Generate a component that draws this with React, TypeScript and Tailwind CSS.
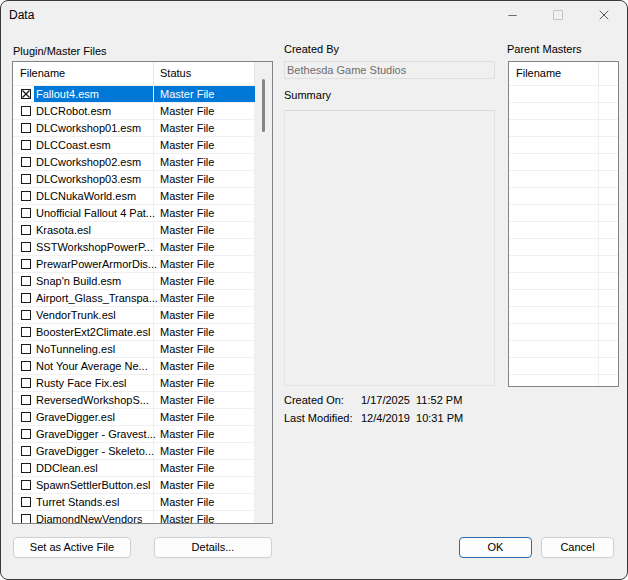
import { Minus, X } from "lucide-react";

const files = [
  "Fallout4.esm",
  "DLCRobot.esm",
  "DLCworkshop01.esm",
  "DLCCoast.esm",
  "DLCworkshop02.esm",
  "DLCworkshop03.esm",
  "DLCNukaWorld.esm",
  "Unofficial Fallout 4 Pat...",
  "Krasota.esl",
  "SSTWorkshopPowerP...",
  "PrewarPowerArmorDis...",
  "Snap'n Build.esm",
  "Airport_Glass_Transpa...",
  "VendorTrunk.esl",
  "BoosterExt2Climate.esl",
  "NoTunneling.esl",
  "Not Your Average Ne...",
  "Rusty Face Fix.esl",
  "ReversedWorkshopS...",
  "GraveDigger.esl",
  "GraveDigger - Gravest...",
  "GraveDigger - Skeleto...",
  "DDClean.esl",
  "SpawnSettlerButton.esl",
  "Turret Stands.esl",
  "DiamondNewVendors",
];

const CheckBox = ({ checked }: { checked?: boolean }) => (
  <svg width="10" height="10" viewBox="0 0 10 10" className="shrink-0">
    <rect x="0.5" y="0.5" width="9" height="9" fill="white" stroke="#1a1a1a" />
    {checked && (
      <path d="M1.5 1.5 L8.5 8.5 M8.5 1.5 L1.5 8.5" stroke="#1a1a1a" strokeWidth="1.3" />
    )}
  </svg>
);

const FileRow = ({ name, index }: { name: string; index: number }) => {
  const selected = index === 0;
  return (
    <div className="flex h-[17px] shrink-0">
      <div className="flex w-[141px] items-center border-b border-r border-[#f0f0f0] pl-[8px]">
        <CheckBox checked={selected} />
        <span
          className={
            selected
              ? "ml-[3px] flex h-[16px] flex-1 items-center bg-[#0078d7] pl-[2px] text-white"
              : "ml-[3px] flex h-[16px] flex-1 items-center pl-[2px]"
          }
        >
          <span className="overflow-hidden whitespace-nowrap">{name}</span>
        </span>
      </div>
      <div
        className={
          selected
            ? "flex w-[101px] items-start border-b border-[#f0f0f0]"
            : "flex w-[101px] items-start border-b border-r border-[#f0f0f0]"
        }
      >
        <span
          className={
            selected
              ? "flex h-[16px] w-full items-center bg-[#0078d7] pl-[6px] text-white"
              : "flex h-[16px] w-full items-center pl-[6px]"
          }
        >
          Master File
        </span>
      </div>
    </div>
  );
};

const App = () => {
  return (
    <div className="h-[580px] w-[628px] overflow-hidden rounded-[8px] border border-[#3a3a3a] bg-[#f0f0f0] font-['Liberation_Sans',Arial,sans-serif] text-[11px] text-black">
      {/* title bar */}
      <div className="flex h-[31px] items-center pb-[3px]">
        <span className="pl-[8px] text-[12px]">Data</span>
        <div className="ml-auto flex h-full">
          <div className="flex w-[46px] items-center justify-center">
            <Minus size={13} strokeWidth={1.2} color="#222" />
          </div>
          <div className="flex w-[46px] items-center justify-center">
            <div className="h-[10px] w-[10px] rounded-[1px] border border-[#c4c4c4]" />
          </div>
          <div className="flex w-[46px] items-center justify-center">
            <X size={16} strokeWidth={1.1} color="#222" />
          </div>
        </div>
      </div>

      {/* body */}
      <div className="flex h-[492px] pl-[11px]">
        {/* plugin list */}
        <div className="flex w-[261px] flex-col">
          <div className="mt-[11px] h-[16px] pl-[1px] leading-[16px]">Plugin/Master Files</div>
          <div className="mt-[2px] flex h-[463px] overflow-hidden border border-[#7f838a] bg-white">
            <div className="flex w-[242px] flex-col overflow-hidden">
              <div className="flex h-[24px] shrink-0 border-b border-[#f0f0f0]">
                <div className="flex w-[141px] items-center border-r border-[#e5e5e5] pl-[7px]">
                  Filename
                </div>
                <div className="flex w-[101px] items-center border-r border-[#e5e5e5] pl-[6px]">
                  Status
                </div>
              </div>
              {files.map((f, i) => (
                <FileRow key={f} name={f} index={i} />
              ))}
            </div>
            <div className="w-[17px] bg-[#f0f0f0]">
              <div className="ml-[7px] mt-[17px] h-[53px] w-[3px] rounded-full bg-[#858585]" />
            </div>
          </div>
        </div>

        {/* details */}
        <div className="ml-[11px] flex w-[211px] flex-col">
          <div className="mt-[9px] h-[16px] leading-[16px]">Created By</div>
          <div className="mt-[4px] flex h-[18px] items-center border border-[#dedede] pl-[2px] text-[#6d6d6d]">
            Bethesda Game Studios
          </div>
          <div className="mt-[8px] h-[16px] leading-[16px]">Summary</div>
          <div className="mt-[7px] h-[276px] border border-[#e3e3e3] border-t-[#d9d9d9]" />
          <div className="mt-[5px] flex h-[18px] items-center">
            <span className="w-[77px]">Created On:</span>
            <span className="whitespace-pre">1/17/2025  11:52 PM</span>
          </div>
          <div className="flex h-[18px] items-center">
            <span className="w-[77px]">Last Modified:</span>
            <span className="whitespace-pre">12/4/2019  10:31 PM</span>
          </div>
        </div>

        {/* parent masters */}
        <div className="ml-[13px] flex w-[111px] flex-col">
          <div className="ml-[-1px] mt-[9px] h-[16px] leading-[16px]">Parent Masters</div>
          <div className="mt-[4px] flex h-[326px] flex-col overflow-hidden border border-[#7f838a] bg-white">
            <div className="flex h-[24px] shrink-0 border-b border-[#f0f0f0]">
              <div className="flex w-[90px] items-center border-r border-[#e5e5e5] pl-[7px]">
                Filename
              </div>
            </div>
            {Array.from({ length: 18 }).map((_, i) => (
              <div key={i} className="flex h-[17px] shrink-0 border-b border-[#f0f0f0]">
                <div className="w-[90px] border-r border-[#f0f0f0]" />
              </div>
            ))}
          </div>
        </div>
      </div>

      {/* buttons */}
      <div className="mt-[13px] flex h-[21px] pl-[12px] pr-[13px]">
        <button className="w-[118px] rounded-[4px] border border-[#d0d0d0] bg-[#fdfdfd]">
          Set as Active File
        </button>
        <button className="ml-[23px] w-[118px] rounded-[4px] border border-[#d0d0d0] bg-[#fdfdfd]">
          Details...
        </button>
        <button className="ml-auto w-[73px] rounded-[4px] border-[1.5px] border-[#2a6aa8] bg-[#fdfdfd]">
          OK
        </button>
        <button className="ml-[9px] w-[73px] rounded-[4px] border border-[#d0d0d0] bg-[#fdfdfd]">
          Cancel
        </button>
      </div>
    </div>
  );
};

export default App;
